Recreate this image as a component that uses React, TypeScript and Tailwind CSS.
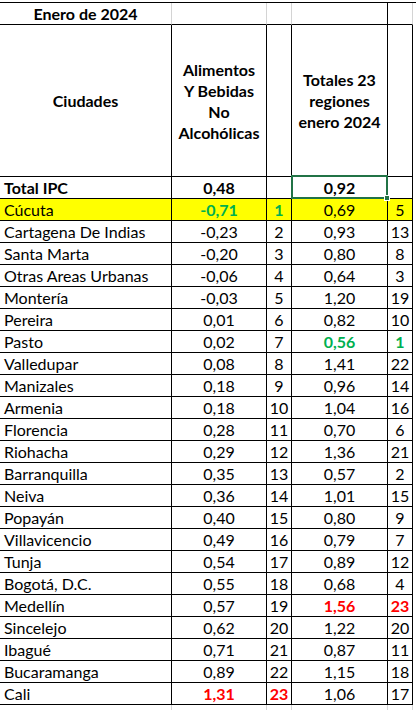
import React from 'react';

type Tone = 'green' | 'red' | undefined;

interface Row {
  city: string;
  food: string;
  foodRank: number;
  total: string;
  totalRank: number;
  foodTone?: Tone;
  totalTone?: Tone;
  highlight?: boolean;
}

const rows: Row[] = [
  { city: 'Cúcuta', food: '-0,71', foodRank: 1, total: '0,69', totalRank: 5, foodTone: 'green', highlight: true },
  { city: 'Cartagena De Indias', food: '-0,23', foodRank: 2, total: '0,93', totalRank: 13 },
  { city: 'Santa Marta', food: '-0,20', foodRank: 3, total: '0,80', totalRank: 8 },
  { city: 'Otras Areas Urbanas', food: '-0,06', foodRank: 4, total: '0,64', totalRank: 3 },
  { city: 'Montería', food: '-0,03', foodRank: 5, total: '1,20', totalRank: 19 },
  { city: 'Pereira', food: '0,01', foodRank: 6, total: '0,82', totalRank: 10 },
  { city: 'Pasto', food: '0,02', foodRank: 7, total: '0,56', totalRank: 1, totalTone: 'green' },
  { city: 'Valledupar', food: '0,08', foodRank: 8, total: '1,41', totalRank: 22 },
  { city: 'Manizales', food: '0,18', foodRank: 9, total: '0,96', totalRank: 14 },
  { city: 'Armenia', food: '0,18', foodRank: 10, total: '1,04', totalRank: 16 },
  { city: 'Florencia', food: '0,28', foodRank: 11, total: '0,70', totalRank: 6 },
  { city: 'Riohacha', food: '0,29', foodRank: 12, total: '1,36', totalRank: 21 },
  { city: 'Barranquilla', food: '0,35', foodRank: 13, total: '0,57', totalRank: 2 },
  { city: 'Neiva', food: '0,36', foodRank: 14, total: '1,01', totalRank: 15 },
  { city: 'Popayán', food: '0,40', foodRank: 15, total: '0,80', totalRank: 9 },
  { city: 'Villavicencio', food: '0,49', foodRank: 16, total: '0,79', totalRank: 7 },
  { city: 'Tunja', food: '0,54', foodRank: 17, total: '0,89', totalRank: 12 },
  { city: 'Bogotá, D.C.', food: '0,55', foodRank: 18, total: '0,68', totalRank: 4 },
  { city: 'Medellín', food: '0,57', foodRank: 19, total: '1,56', totalRank: 23, totalTone: 'red' },
  { city: 'Sincelejo', food: '0,62', foodRank: 20, total: '1,22', totalRank: 20 },
  { city: 'Ibagué', food: '0,71', foodRank: 21, total: '0,87', totalRank: 11 },
  { city: 'Bucaramanga', food: '0,89', foodRank: 22, total: '1,15', totalRank: 18 },
  { city: 'Cali', food: '1,31', foodRank: 23, total: '1,06', totalRank: 17, foodTone: 'red' },
];

const toneClass = (tone: Tone) => {
  switch (tone) {
    case 'green': return 'font-bold text-[#00b050]';
    case 'red': return 'font-bold text-[#ff0000]';
    default: return 'text-black';
  }
};

const cell = 'h-[22px] border-r border-b border-black flex items-center';

export default function App() {
  return (
    <div className="w-[416px] h-[710px] bg-white overflow-hidden pt-[2px] font-['Lato','Liberation_Sans',sans-serif] text-[16px] text-black">
      <div className="grid grid-cols-[172px_95px_25px_96px_25px] border-t border-black">
        {/* Title row */}
        <div className="h-[22px] border-r border-b border-r-[#d4d4d4] border-b-black flex items-center justify-center font-bold">
          Enero de 2024
        </div>
        <div className="h-[22px] border-r border-b border-r-[#d4d4d4] border-b-black" />
        <div className="h-[22px] border-r border-b border-r-[#d4d4d4] border-b-black" />
        <div className="h-[22px] border-r border-b border-black" />
        <div className="h-[22px] border-r border-b border-r-[#d4d4d4] border-b-black" />

        {/* Header row */}
        <div className="h-[152px] border-r border-b border-black flex items-center justify-center font-bold">
          Ciudades
        </div>
        <div className="h-[152px] border-r border-b border-black flex items-center justify-center text-center font-bold leading-[21px]">
          Alimentos<br />Y Bebidas<br />No<br />Alcohólicas
        </div>
        <div className="h-[152px] border-r border-b border-black" />
        <div className="h-[152px] border-r border-b border-black flex items-center justify-center text-center font-bold leading-[21px]">
          Totales 23<br />regiones<br />enero 2024
        </div>
        <div className="h-[152px] border-r border-b border-black" />

        {/* Total row */}
        <div className={`${cell} pl-[4px] font-bold`}>Total IPC</div>
        <div className={`${cell} justify-center font-bold`}>0,48</div>
        <div className={cell} />
        <div className={`${cell} justify-center font-bold relative`}>
          0,92
          <div className="absolute -left-[1px] -top-[2px] w-[97px] h-[24px] border-2 border-[#217346]" />
          <div className="absolute -right-[3px] -bottom-[3px] w-[6px] h-[6px] bg-[#217346] border border-white" />
        </div>
        <div className={cell} />

        {rows.map((r) => {
          const bg = r.highlight ? 'bg-[#ffff00]' : 'bg-white';
          return (
            <React.Fragment key={r.city}>
              <div className={`${cell} ${bg} pl-[4px] whitespace-nowrap`}>{r.city}</div>
              <div className={`${cell} ${bg} justify-center ${toneClass(r.foodTone)}`}>{r.food}</div>
              <div className={`${cell} ${bg} justify-center ${toneClass(r.foodTone)}`}>{r.foodRank}</div>
              <div className={`${cell} ${bg} justify-center ${toneClass(r.totalTone)}`}>{r.total}</div>
              <div className={`${cell} ${bg} justify-center ${toneClass(r.totalTone)}`}>{r.totalRank}</div>
            </React.Fragment>
          );
        })}

        {/* empty sheet grid below */}
        {[0, 1, 2, 3, 4].map((i) => (
          <div key={i} className="h-[10px] border-r border-[#d4d4d4]" />
        ))}
      </div>
    </div>
  );
}
